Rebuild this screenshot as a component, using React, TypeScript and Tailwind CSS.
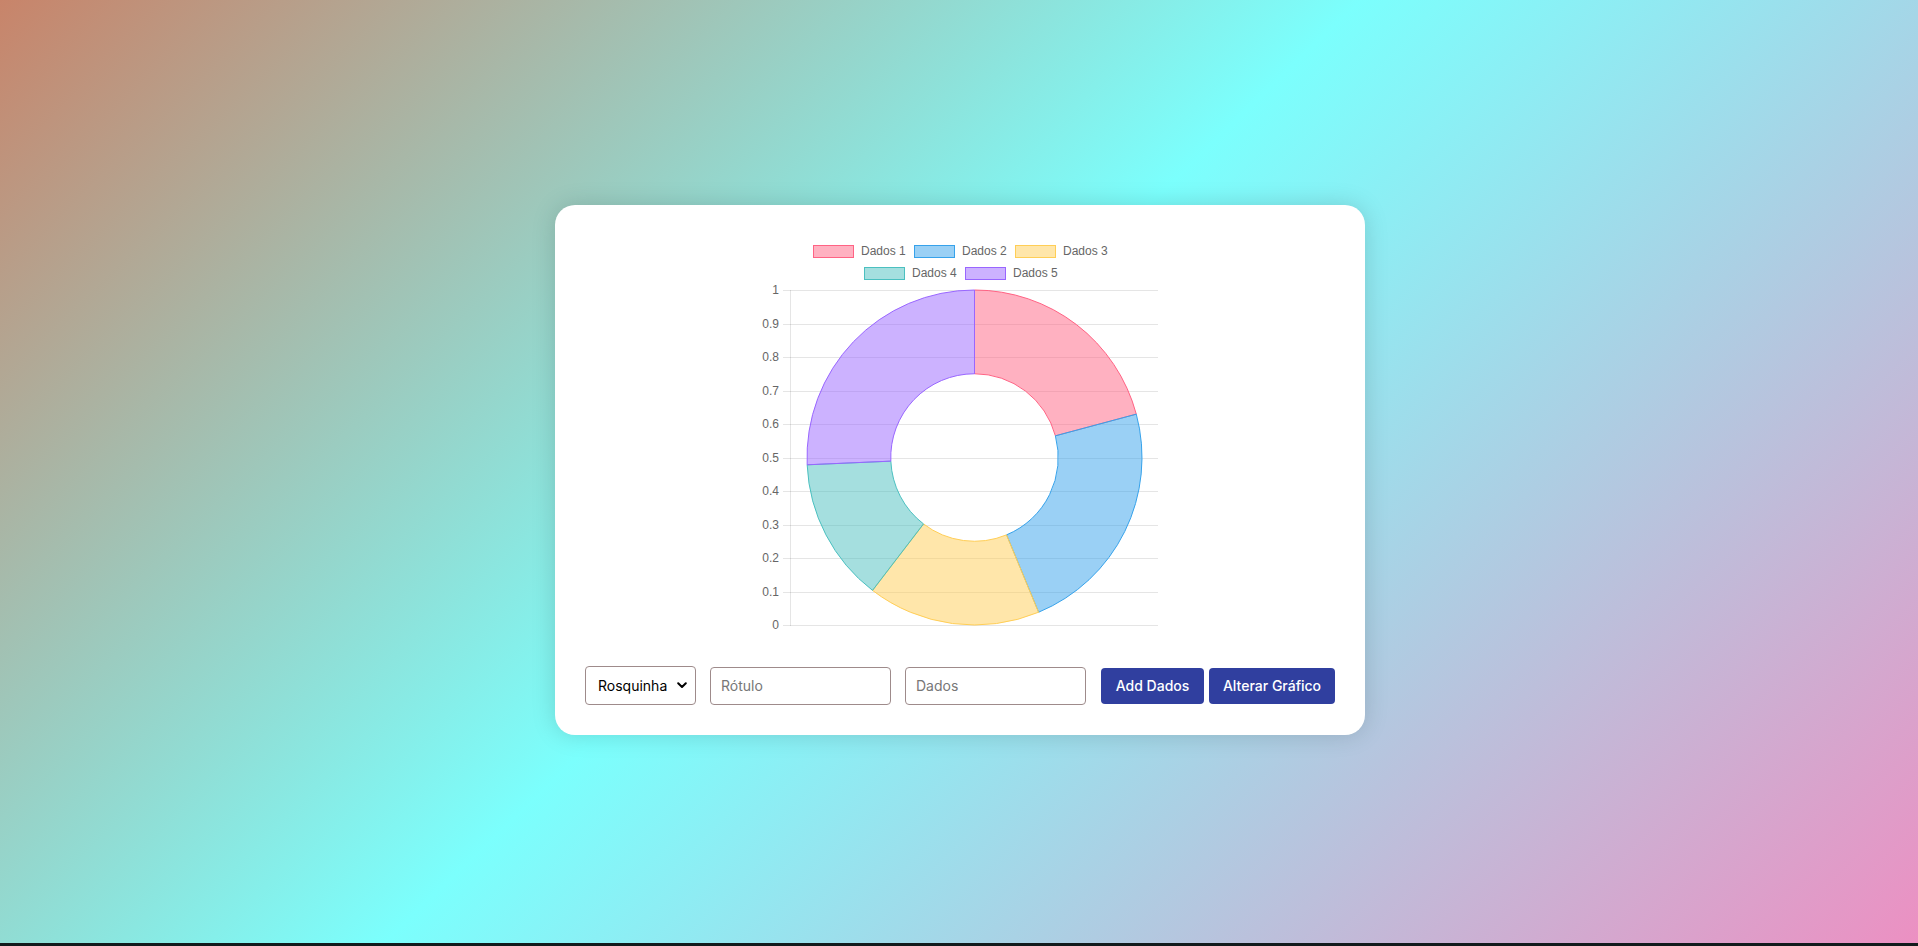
import { useState } from 'react';

const series = [
    { label: 'Dados 1', value: 30, fill: 'rgba(255,99,132,0.5)', stroke: 'rgb(255,99,132)' },
    { label: 'Dados 2', value: 33, fill: 'rgba(54,162,235,0.5)', stroke: 'rgb(54,162,235)' },
    { label: 'Dados 3', value: 24, fill: 'rgba(255,206,86,0.5)', stroke: 'rgb(255,206,86)' },
    { label: 'Dados 4', value: 20, fill: 'rgba(75,192,192,0.5)', stroke: 'rgb(75,192,192)' },
    { label: 'Dados 5', value: 37, fill: 'rgba(153,102,255,0.5)', stroke: 'rgb(153,102,255)' },
];

// legend positions inside the 400x400 canvas
const legend = [
    { x: 53, y: 10 },
    { x: 154, y: 10 },
    { x: 255, y: 10 },
    { x: 104, y: 32 },
    { x: 205, y: 32 },
];

const CX = 214.5;
const CY = 222.5;
const R = 167.5;
const RI = 83.75;

function arcPath(a0: number, a1: number) {
    const p = (r: number, a: number) => [CX + r * Math.sin(a), CY - r * Math.cos(a)];
    const large = a1 - a0 > Math.PI ? 1 : 0;
    const [x0, y0] = p(R, a0);
    const [x1, y1] = p(R, a1);
    const [x2, y2] = p(RI, a1);
    const [x3, y3] = p(RI, a0);
    return `M${x0} ${y0} A${R} ${R} 0 ${large} 1 ${x1} ${y1} L${x2} ${y2} A${RI} ${RI} 0 ${large} 0 ${x3} ${y3} Z`;
}

function DoughnutChart() {
    const total = series.reduce((s, d) => s + d.value, 0);
    let acc = 0;
    const ticks = Array.from({ length: 11 }, (_, i) => i);

    return (
        <svg width="400" height="400" viewBox="0 0 400 400" className="mx-auto block font-['Liberation_Sans',Arial,sans-serif]">
            {legend.map((pos, i) => (
                <g key={series[i].label}>
                    <rect x={pos.x + 0.5} y={pos.y + 0.5} width="40" height="12" fill={series[i].fill} stroke={series[i].stroke} strokeWidth="1" />
                    <text x={pos.x + 48} y={pos.y + 7} fontSize="12" fill="#666" dominantBaseline="middle">
                        {series[i].label}
                    </text>
                </g>
            ))}

            {/* y axis grid */}
            {ticks.map((i) => {
                const y = Math.round(55 + i * 33.5) + 0.5;
                const label = i === 0 ? '1' : i === 10 ? '0' : `0.${10 - i}`;
                return (
                    <g key={i}>
                        <line x1="23" x2="398" y1={y} y2={y} stroke="rgba(0,0,0,0.1)" strokeWidth="1" />
                        <text x="19" y={y} fontSize="12" fill="#666" textAnchor="end" dominantBaseline="middle">
                            {label}
                        </text>
                    </g>
                );
            })}
            <line x1="30.5" x2="30.5" y1="55" y2="391" stroke="rgba(0,0,0,0.1)" strokeWidth="1" />

            {series.map((d) => {
                const a0 = (acc / total) * Math.PI * 2;
                acc += d.value;
                const a1 = (acc / total) * Math.PI * 2;
                return <path key={d.label} d={arcPath(a0, a1)} fill={d.fill} stroke={d.stroke} strokeWidth="1" strokeLinejoin="round" />;
            })}
        </svg>
    );
}

export default function App() {
    const [tipo, setTipo] = useState('doughnut');

    return (
        <div className="w-full font-['Inter','Open_Sans',sans-serif]">
            <div className="h-[943px] w-full flex items-center justify-center pb-[3px] pl-[2px] bg-[linear-gradient(136deg,#c8846a_0%,#7bfffd_47%,#ec90c2_100%)]">
                <div className="w-[810px] h-[530px] bg-white rounded-[20px] shadow-[0_0_25px_rgba(0,0,0,0.15)] p-[30px] flex flex-col">
                    <DoughnutChart />

                    <div className="mt-[31px] flex items-center">
                        <div className="relative w-[111px] h-[39px]">
                            <select
                                value={tipo}
                                onChange={(e) => setTipo(e.target.value)}
                                className="appearance-none w-full h-full border border-[#9e8b8b] rounded-[4px] bg-white pl-[12px] pr-6 text-[14px] text-black outline-none"
                            >
                                <option value="doughnut">Rosquinha</option>
                                <option value="bar">Barra</option>
                                <option value="line">Linha</option>
                                <option value="pie">Pizza</option>
                            </select>
                            <svg className="absolute right-[9px] top-[16px] pointer-events-none" width="10" height="7" viewBox="0 0 10 7">
                                <path d="M1.2 1.2 L5 5 L8.8 1.2" fill="none" stroke="#000" strokeWidth="2" strokeLinecap="round" strokeLinejoin="round" />
                            </svg>
                        </div>
                        <input
                            type="text"
                            placeholder="Rótulo"
                            className="ml-[14px] w-[181px] h-[38px] border border-[#9e8b8b] rounded-[4px] px-[10px] text-[14px] placeholder:text-[#777] outline-none"
                        />
                        <input
                            type="text"
                            placeholder="Dados"
                            className="ml-[14px] w-[181px] h-[38px] border border-[#9e8b8b] rounded-[4px] px-[10px] text-[14px] placeholder:text-[#777] outline-none"
                        />
                        <button className="ml-[15px] w-[103px] h-[36px] rounded-[4px] bg-[#303f9f] text-white text-[14px] font-medium">
                            Add Dados
                        </button>
                        <button className="ml-[5px] w-[126px] h-[36px] rounded-[4px] bg-[#303f9f] text-white text-[14px] font-medium">
                            Alterar Gráfico
                        </button>
                    </div>
                </div>
            </div>
            <div className="h-[3px] w-full bg-[#121a1c]" />
        </div>
    );
}
